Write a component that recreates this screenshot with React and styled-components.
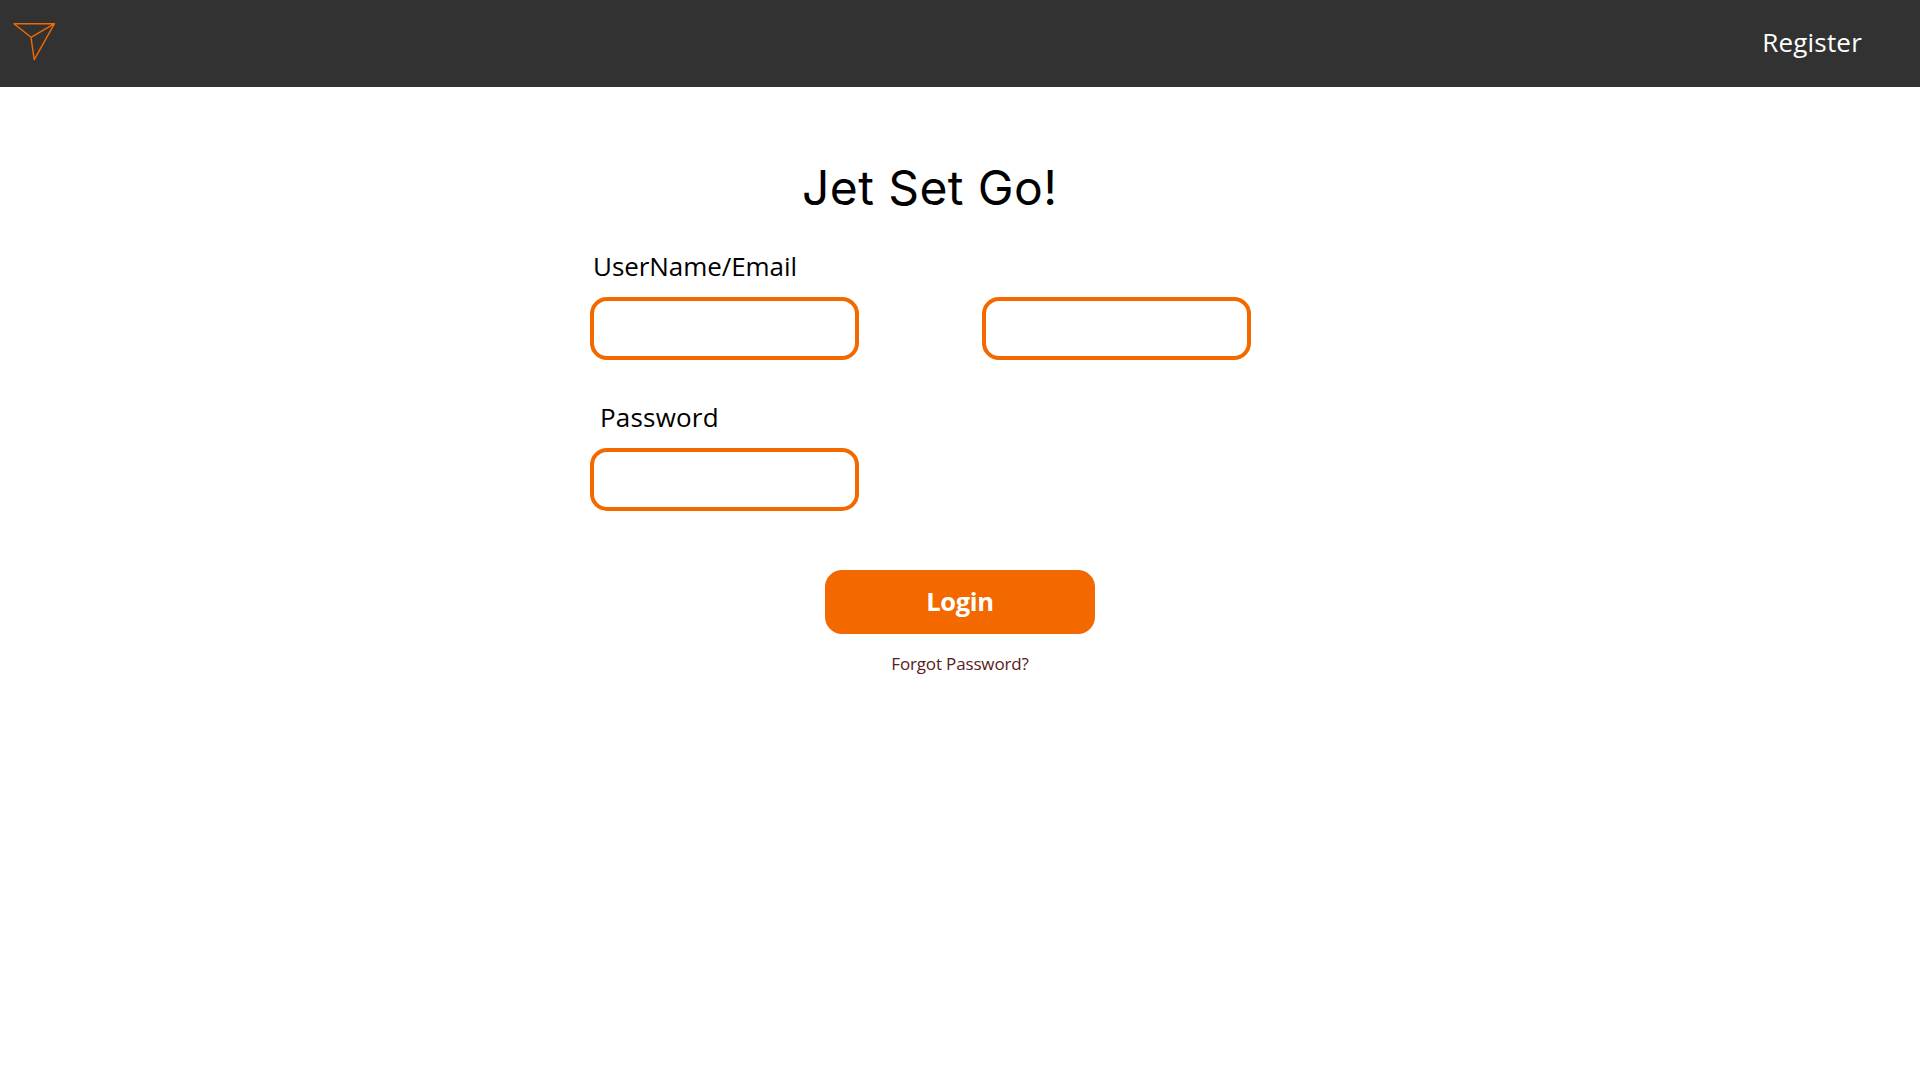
import React from "react";
import styled, { createGlobalStyle } from "styled-components";

const ORANGE = "#f36900";

const GlobalStyle = createGlobalStyle`
  * { box-sizing: border-box; }
  body {
    margin: 0;
    background: #ffffff;
    color: #000000;
    font-family: "Open Sans", "Noto Sans", sans-serif;
    overflow: hidden;
  }
`;

const Page = styled.div`
  display: flex;
  flex-direction: column;
  width: 1920px;
  height: 1080px;
  background: #ffffff;
`;

const Header = styled.header`
  display: flex;
  align-items: flex-start;
  justify-content: space-between;
  height: 87px;
  padding: 22px 58px 0 13px;
  background: #323232;
`;

const Logo = styled.svg`
  display: block;
  width: 43px;
  height: 40px;
  fill: none;
  stroke: ${ORANGE};
  stroke-width: 1.4;
  stroke-linejoin: round;
`;

const RegisterLink = styled.a`
  margin-top: 2px;
  color: #ffffff;
  font-size: 26px;
  line-height: 36px;
  letter-spacing: 0.2px;
`;

const Main = styled.main`
  display: flex;
  flex-direction: column;
  width: 740px;
  margin-left: 590px;
`;

const Title = styled.h1`
  margin: 71px 0 0 212px;
  font-family: Inter, "Noto Sans", sans-serif;
  font-size: 48px;
  font-weight: 400;
  line-height: 60px;
  letter-spacing: 0.4px;
  white-space: nowrap;
`;

const Form = styled.form`
  display: grid;
  grid-template-columns: 269.5px 269.5px;
  column-gap: 122.5px;
  row-gap: 39px;
  align-items: end;
  margin-top: 30px;
`;

const Field = styled.label`
  display: flex;
  flex-direction: column;
`;

const FieldName = styled.span`
  height: 36px;
  margin-bottom: 13px;
  padding-left: ${(p) => p.$indent}px;
  font-size: 26px;
  line-height: 36px;
  letter-spacing: ${(p) => p.$tracking}px;
  white-space: nowrap;
`;

const Input = styled.input`
  width: 269.4px;
  height: 63px;
  padding: 0 16px;
  border: 4px solid ${ORANGE};
  border-radius: 17px;
  background: #ffffff;
  font: inherit;
  font-size: 24px;
  outline: none;
`;

const Actions = styled.div`
  display: flex;
  flex-direction: column;
  align-items: center;
  width: 740px;
  margin-top: 59px;
`;

const LoginButton = styled.button`
  width: 270px;
  height: 64px;
  padding: 0 0 2px;
  border: 0;
  border-radius: 17px;
  background: ${ORANGE};
  color: #ffffff;
  font-family: inherit;
  font-size: 25.5px;
  font-weight: 700;
  line-height: 62px;
  letter-spacing: -0.3px;
`;

const ForgotLink = styled.a`
  margin-top: 18px;
  color: #56211a;
  font-size: 17px;
  line-height: 24px;
  letter-spacing: -0.15px;
`;

export default function App() {
  return (
    <>
      <GlobalStyle />
      <Page>
        <Header>
          <Logo viewBox="0 0 43 40">
            <path d="M1 1.7H41.5L21.2 37.6L18 15.3ZM18 15.3L41.5 1.7" />
          </Logo>
          <RegisterLink>Register</RegisterLink>
        </Header>
        <Main>
          <Title>Jet Set Go!</Title>
          <Form>
            <Field>
              <FieldName $indent={3} $tracking={-0.07}>UserName/Email</FieldName>
              <Input type="text" />
            </Field>
            <Input type="text" />
            <Field>
              <FieldName $indent={10} $tracking={0.2}>Password</FieldName>
              <Input type="password" />
            </Field>
          </Form>
          <Actions>
            <LoginButton type="button">Login</LoginButton>
            <ForgotLink>Forgot Password?</ForgotLink>
          </Actions>
        </Main>
      </Page>
    </>
  );
}
